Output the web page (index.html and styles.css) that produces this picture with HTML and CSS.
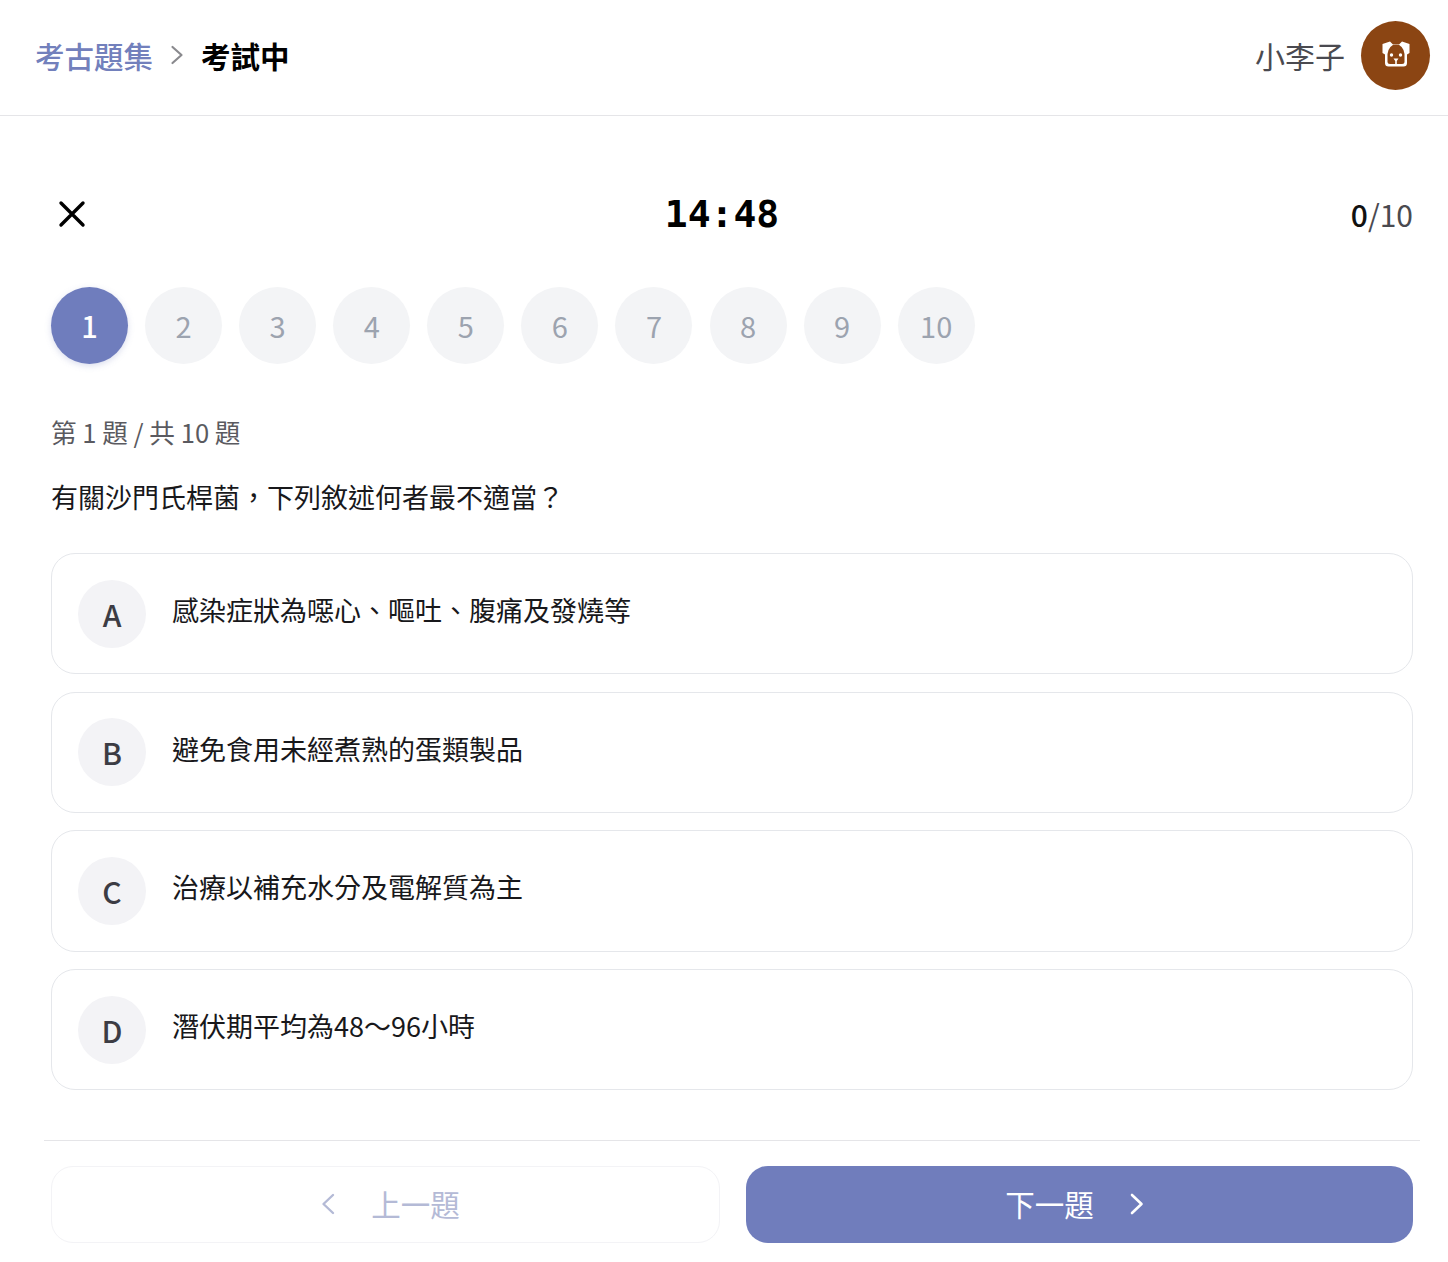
FILE: index.html
```html
<!DOCTYPE html>
<html lang="zh-Hant">
<head>
    <meta charset="UTF-8">
    <meta name="viewport" content="width=device-width, initial-scale=1.0">
    <title>考試中</title>
    <link rel="stylesheet" href="styles.css">
</head>
<body>
    <header class="topbar">
        <nav class="crumbs">
            <span class="crumb-link">考古題集</span>
            <svg class="crumb-arrow" viewBox="0 0 14 22" width="14" height="22"><path d="M2.5 3 L11.5 11 L2.5 19" fill="none" stroke="#8a8a8e" stroke-width="2.2" stroke-linecap="round" stroke-linejoin="round"/></svg>
            <span class="crumb-current">考試中</span>
        </nav>
        <div class="user">
            <span class="user-name">小李子</span>
            <div class="avatar">
                <svg class="avatar-icon" viewBox="0 0 28 26" width="28" height="26">
                    <path d="M0.5 3 L8 0.5 L11 3.5 Q14 3 17 3.5 L20 0.5 L27.5 3 L27.5 12 L25 13.5 L25 22 Q25 25.5 21.5 25.5 L6.5 25.5 Q3 25.5 3 22 L3 13.5 L0.5 12 Z" fill="#fff"/>
                    <path d="M5.5 13 Q7 3.5 14 3.5 Q21 3.5 22.5 13 L22.5 20.5 Q22.5 23 20 23 L8 23 Q5.5 23 5.5 20.5 Z" fill="#8b4513"/>
                    <circle cx="9.5" cy="14" r="1.7" fill="#fff"/>
                    <circle cx="18.5" cy="14" r="1.7" fill="#fff"/>
                    <path d="M11.5 17.5 L16.5 17.5 L14.8 20 L14.8 23 L13.2 23 L13.2 20 Z" fill="#fff"/>
                </svg>
            </div>
        </div>
    </header>

    <main class="quiz">
        <div class="quiz-top">
            <svg class="close-icon" viewBox="0 0 28 28" width="28" height="28"><path d="M3 3 L25 25 M25 3 L3 25" fill="none" stroke="#000" stroke-width="3.4" stroke-linecap="round"/></svg>
            <div class="timer">14:48</div>
            <div class="progress"><b>0</b>/10</div>
        </div>

        <div class="steps">
            <span class="step active">1</span>
            <span class="step">2</span>
            <span class="step">3</span>
            <span class="step">4</span>
            <span class="step">5</span>
            <span class="step">6</span>
            <span class="step">7</span>
            <span class="step">8</span>
            <span class="step">9</span>
            <span class="step">10</span>
        </div>

        <p class="q-count">第 1 題 / 共 10 題</p>
        <p class="q-text">有關沙門氏桿菌，下列敘述何者最不適當？</p>

        <div class="options">
            <div class="option"><span class="letter">A</span><span class="option-text">感染症狀為噁心、嘔吐、腹痛及發燒等</span></div>
            <div class="option"><span class="letter">B</span><span class="option-text">避免食用未經煮熟的蛋類製品</span></div>
            <div class="option"><span class="letter">C</span><span class="option-text">治療以補充水分及電解質為主</span></div>
            <div class="option"><span class="letter">D</span><span class="option-text">潛伏期平均為48～96小時</span></div>
        </div>
    </main>

    <footer class="bottom">
        <button class="btn btn-prev">
            <svg viewBox="0 0 14 24" width="14" height="24"><path d="M12 3 L2.5 12 L12 21" fill="none" stroke="#b4bad6" stroke-width="2.4" stroke-linecap="round" stroke-linejoin="round"/></svg>
            <span>上一題</span>
        </button>
        <button class="btn btn-next">
            <span>下一題</span>
            <svg viewBox="0 0 14 24" width="14" height="24"><path d="M2 3 L11.5 12 L2 21" fill="none" stroke="#fff" stroke-width="2.6" stroke-linecap="round" stroke-linejoin="round"/></svg>
        </button>
    </footer>
</body>
</html>
```

FILE: styles.css
```css
/* Global */
body {
    margin: 0;
    background-color: #fff;
    color: #111;
    font-family: "Noto Sans CJK TC", "Noto Sans", sans-serif;
}

p {
    margin: 0;
}

/* Top bar */
.topbar {
    height: 111px;
    border-bottom: 1px solid #e5e5e8;
    padding: 0 18px 4px 35px;
    display: flex;
    align-items: center;
    justify-content: space-between;
}

.crumbs {
    display: flex;
    align-items: center;
    font-size: 29.5px;
    line-height: 40px;
    padding-bottom: 2px;
}

.crumb-link {
    color: #7280bc;
    font-weight: 500;
}

.crumb-arrow {
    margin: 0 17px;
}

.crumb-current {
    color: #000;
    font-weight: 700;
}

.user {
    display: flex;
    align-items: center;
    gap: 16px;
}

.user-name {
    color: #4a4a50;
    font-size: 30px;
    line-height: 40px;
    padding-bottom: 2px;
}

.avatar {
    width: 69px;
    height: 69px;
    border-radius: 50%;
    background-color: #8b4513;
    display: flex;
    align-items: center;
    justify-content: center;
}

.avatar-icon {
    margin-bottom: 3px;
}

/* Quiz */
.quiz {
    padding: 0 35px 0 51px;
}

.quiz-top {
    height: 100px;
    margin-top: 48px;
    display: flex;
    align-items: center;
    justify-content: space-between;
    position: relative;
}

.close-icon {
    margin-left: 7px;
}

.timer {
    position: absolute;
    left: 0;
    right: 0;
    text-align: center;
    margin-left: -20px;
    font-family: "DejaVu Sans Mono", monospace;
    font-size: 38px;
    font-weight: 700;
    color: #000;
}

.progress {
    font-size: 30px;
    line-height: 40px;
    color: #4a4a50;
}

.progress b {
    font-weight: 500;
    color: #111;
}

.steps {
    display: flex;
    gap: 17.08px;
    margin-top: 23px;
}

.step {
    width: 77px;
    height: 77px;
    padding-bottom: 2px;
    box-sizing: border-box;
    border-radius: 50%;
    background-color: #f3f4f6;
    color: #9ca3af;
    font-size: 29px;
    display: flex;
    align-items: center;
    justify-content: center;
}

.step.active {
    background-color: #6f7dbd;
    color: #fff;
    font-weight: 500;
    box-shadow: 0 2px 6px rgba(111, 125, 189, 0.25);
}

.q-count {
    margin-top: 48px;
    font-size: 25.6px;
    line-height: 40px;
    color: #5a5a60;
}

.q-text {
    margin-top: 25px;
    font-size: 27px;
    line-height: 40px;
    color: #18181b;
}

/* Options */
.options {
    margin-top: 36px;
    display: flex;
    flex-direction: column;
    gap: 17.37px;
}

.option {
    height: 119.3px;
    border: 1px solid #e5e7eb;
    border-radius: 24px;
    padding: 0 26px;
    display: flex;
    align-items: center;
    gap: 26px;
}

.letter {
    width: 68px;
    height: 68px;
    flex-shrink: 0;
    border-radius: 50%;
    background-color: #f3f3f6;
    color: #3c3c44;
    font-size: 30px;
    font-weight: 500;
    display: flex;
    align-items: center;
    justify-content: center;
}

.option-text {
    font-size: 27px;
    line-height: 40px;
    color: #18181b;
    margin-bottom: 7px;
}

/* Bottom bar */
.bottom {
    margin: 49.5px 28px 0 44px;
    border-top: 1px solid #e5e5e8;
    padding: 25px 7px 19px;
    display: flex;
    gap: 26px;
}

.btn {
    flex: 1;
    height: 77px;
    border-radius: 22px;
    font-family: inherit;
    font-size: 29.5px;
    line-height: 40px;
    display: flex;
    align-items: center;
    justify-content: center;
    gap: 36px;
}

.btn span {
    padding-bottom: 2px;
}

.btn-prev {
    background-color: #fff;
    border: 1px solid #f3f3f6;
    color: #b4bad6;
    padding: 0 0 0 10px;
}

.btn-next {
    background-color: #707dbc;
    border: none;
    color: #fff;
    padding: 0 10px 0 0;
}
```
